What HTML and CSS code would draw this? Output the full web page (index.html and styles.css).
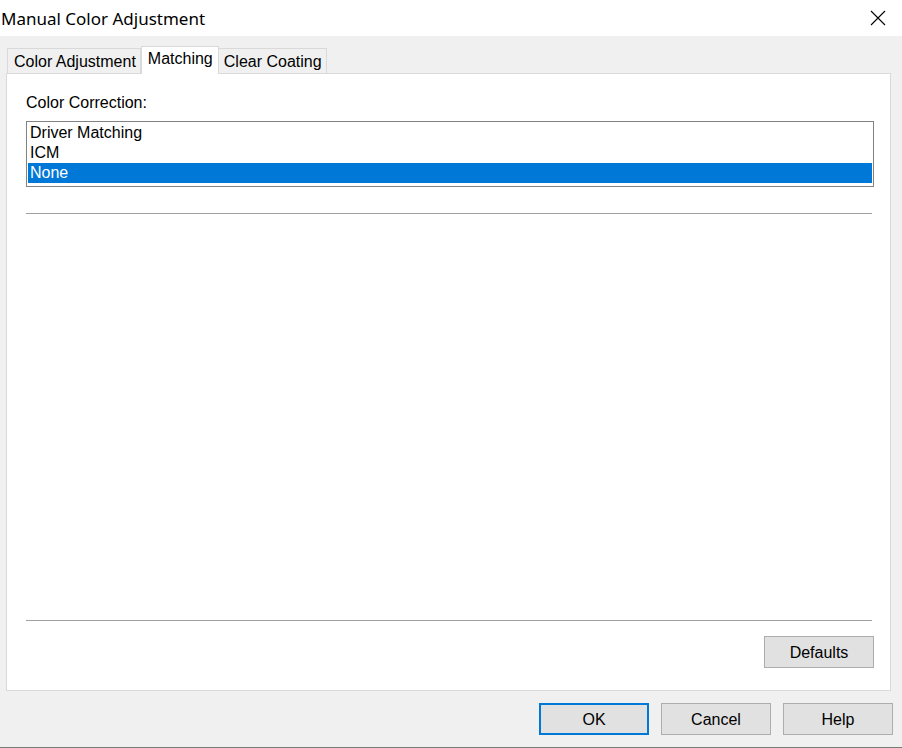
FILE: index.html
```html
<!DOCTYPE html>
<html lang="en">
<head>
    <meta charset="UTF-8">
    <title>Manual Color Adjustment</title>
    <link rel="stylesheet" href="styles.css">
</head>
<body>

<div class="window">
    <div class="titlebar">
        <span class="title">Manual Color Adjustment</span>
        <svg class="close" width="16" height="16" viewBox="0 0 16 16">
            <path d="M1 1 L15 15 M15 1 L1 15" stroke="#000" stroke-width="1.1" fill="none"/>
        </svg>
    </div>

    <div class="client">
        <div class="tabs">
            <div class="tab">Color Adjustment</div>
            <div class="tab active">Matching</div>
            <div class="tab">Clear Coating</div>
        </div>

        <div class="panel">
            <div class="field-label">Color Correction:</div>
            <ul class="listbox">
                <li>Driver Matching</li>
                <li>ICM</li>
                <li class="selected">None</li>
            </ul>
            <div class="separator top-sep"></div>
            <div class="spacer"></div>
            <div class="separator"></div>
            <div class="panel-buttons">
                <button type="button">Defaults</button>
            </div>
        </div>

        <div class="dialog-buttons">
            <button type="button" class="default">OK</button>
            <button type="button">Cancel</button>
            <button type="button">Help</button>
        </div>
    </div>
</div>

</body>
</html>
```

FILE: styles.css
```css
body {
    margin: 0;
    font-family: "Liberation Sans", Arial, sans-serif;
    font-size: 16px;
    color: #000;
    background-color: #f0f0f0;
}
.window {
    width: 902px;
    height: 748px;
    display: flex;
    flex-direction: column;
    box-sizing: border-box;
    border-bottom: 1px solid #7a7a7a;
}
.titlebar {
    height: 36px;
    background-color: #fff;
    display: flex;
    align-items: center;
    justify-content: space-between;
    padding: 0 16px 0 1px;
}
.title {
    font-family: "Noto Sans", "Open Sans", sans-serif;
    font-size: 17px;
    margin-top: 1px;
}
.client {
    flex: 1;
    display: flex;
    flex-direction: column;
    padding-top: 10px;
}
.tabs {
    display: flex;
    align-items: flex-end;
    padding-left: 7px;
    height: 27px;
    position: relative;
    z-index: 1;
}
.tab {
    height: 25px;
    box-sizing: border-box;
    padding: 3px 4px 0 6px;
    background-color: #f0f0f0;
    border: 1px solid #d9d9d9;
    border-bottom: none;
    line-height: 20px;
}
.tab + .tab {
    border-left: none;
    padding-left: 5px;
}
.tab.active {
    height: 28px;
    background-color: #fff;
    padding: 2px 5px 0 6px;
    margin-bottom: -1px;
    border-left: 1px solid #d9d9d9;
}
.panel {
    margin-left: 6px;
    width: 885px;
    height: 618px;
    box-sizing: border-box;
    background-color: #fff;
    border: 1px solid #d9d9d9;
    display: flex;
    flex-direction: column;
    padding: 20px 16px 0 19px;
}
.field-label {
    line-height: 18px;
    margin-bottom: 9px;
}
.listbox {
    list-style: none;
    margin: 0;
    padding: 1px;
    height: 66px;
    box-sizing: border-box;
    border: 1px solid #828282;
}
.listbox li {
    height: 20px;
    line-height: 20px;
    padding-left: 2px;
}
.listbox li.selected {
    background-color: #0078d7;
    color: #fff;
}
.separator {
    height: 1px;
    background-color: #a0a0a0;
    margin-right: 2px;
}
.top-sep {
    margin-top: 26px;
}
.spacer {
    flex: 1;
}
.panel-buttons {
    display: flex;
    justify-content: flex-end;
    margin-top: 15px;
    margin-bottom: 22px;
}
button {
    font-family: "Liberation Sans", Arial, sans-serif;
    font-size: 16px;
    color: #000;
    width: 110px;
    height: 32px;
    padding: 2px 0 0 0;
    background-color: #e1e1e1;
    border: 1px solid #adadad;
    border-radius: 0;
}
.dialog-buttons {
    display: flex;
    justify-content: flex-end;
    gap: 12px;
    padding-right: 9px;
    margin-top: 12px;
}
button.default {
    border: 2px solid #0078d7;
}
```
